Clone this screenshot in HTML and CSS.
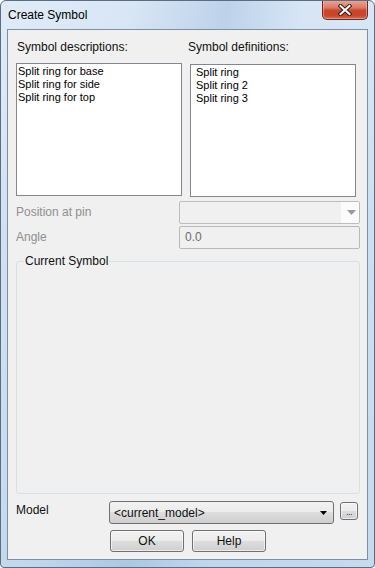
FILE: index.html
```html
<!DOCTYPE html>
<html>
<head>
<meta charset="utf-8">
<title>Create Symbol</title>
<link rel="stylesheet" href="styles.css">
</head>
<body>
<div class="window">
  <div class="titlebar">
    <span class="title">Create Symbol</span>
    <div class="close">
      <svg width="14" height="12" viewBox="0 0 14 12">
        <path d="M2.5 2 L11.5 10 M11.5 2 L2.5 10" stroke="#3d1a14" stroke-width="4" stroke-linecap="square" fill="none"/>
        <path d="M2.5 2 L11.5 10 M11.5 2 L2.5 10" stroke="#ffffff" stroke-width="2" stroke-linecap="square" fill="none"/>
      </svg>
    </div>
  </div>
  <div class="client">
    <div class="lists">
      <div class="col">
        <div class="label label-left">Symbol descriptions:</div>
        <ul class="listbox listbox-left">
          <li>Split ring for base</li>
          <li>Split ring for side</li>
          <li>Split ring for top</li>
        </ul>
      </div>
      <div class="col">
        <div class="label label-right">Symbol definitions:</div>
        <ul class="listbox listbox-right">
          <li>Split ring</li>
          <li>Split ring 2</li>
          <li>Split ring 3</li>
        </ul>
      </div>
    </div>

    <div class="row row-pos">
      <span class="field-label disabled">Position at pin</span>
      <div class="dcombo">
        <span class="dcombo-text"></span>
        <span class="dcombo-btn">
          <svg width="9" height="5" viewBox="0 0 9 5"><path d="M0 0 H9 L4.5 5 Z" fill="#9a9a9a"/></svg>
        </span>
      </div>
    </div>

    <div class="row row-angle">
      <span class="field-label disabled">Angle</span>
      <div class="dtext">0.0</div>
    </div>

    <div class="group">
      <div class="group-box"></div>
      <div class="group-title">Current Symbol</div>
    </div>

    <div class="row row-model">
      <span class="field-label">Model</span>
      <div class="combo">
        <span class="combo-text">&lt;current_model&gt;</span>
        <svg class="combo-arrow" width="7" height="4" viewBox="0 0 7 4"><path d="M0 0 H7 L3.5 4 Z" fill="#000"/></svg>
      </div>
      <div class="btn btn-dots">...</div>
    </div>

    <div class="buttons">
      <div class="btn btn-main">OK</div>
      <div class="btn btn-main">Help</div>
    </div>
  </div>
</div>
</body>
</html>
```

FILE: styles.css
```css
html, body {
  margin: 0;
  padding: 0;
  background: #ffffff;
}

body {
  font-family: "Liberation Sans", Arial, sans-serif;
  font-size: 12px;
  color: #111;
}

.window {
  width: 375px;
  height: 568px;
  box-sizing: border-box;
  border: 1px solid #5b6d80;
  border-radius: 6px 6px 4px 4px;
  padding: 0 6px 7px 6px;
  display: flex;
  flex-direction: column;
  background:
    linear-gradient(100deg, rgba(255,255,255,0.3) 0%, rgba(255,255,255,0.12) 28%, rgba(150,180,215,0.35) 48%, rgba(255,255,255,0.1) 64%, rgba(255,255,255,0.2) 100%),
    linear-gradient(to bottom, #d3e3f4 0%, #c3d8ee 40%, #b9d1ea 100%);
  overflow: hidden;
}

.titlebar {
  height: 28px;
  display: flex;
  align-items: flex-start;
  justify-content: space-between;
  flex: 0 0 28px;
}

.title {
  margin-top: 7px;
  padding-left: 1px;
  line-height: 15px;
  font-size: 12px;
  color: #000;
}

.close {
  width: 46px;
  height: 20px;
  margin-top: -1px;
  box-sizing: border-box;
  border: 1px solid #6a2a22;
  border-top: none;
  border-radius: 0 0 5px 5px;
  background: linear-gradient(to bottom, #e9a99a 0%, #dc7b66 40%, #c9462d 55%, #c8452b 80%, #d76a4c 100%);
  box-shadow: inset 0 0 0 1px rgba(255, 200, 190, 0.45);
  display: flex;
  align-items: center;
  justify-content: center;
}

.close svg {
  display: block;
}

.client {
  flex: 1 1 auto;
  border: 1px solid #7f8fa1;
  background: #f0f0f0;
  padding: 10px 7px 0 8px;
  display: flex;
  flex-direction: column;
}

.lists {
  display: grid;
  grid-template-columns: 166px 166px;
  column-gap: 8px;
}

.label {
  line-height: 15px;
  height: 15px;
  white-space: nowrap;
}

.label-left {
  margin-left: 1px;
}

.label-right {
  margin-left: -2px;
}

.listbox {
  list-style: none;
  margin: 0;
  height: 133px;
  box-sizing: border-box;
  border: 1px solid #828790;
  background: #ffffff;
  font-size: 11px;
  line-height: 13px;
  color: #000;
}

.listbox-left {
  margin-top: 8px;
  padding: 1px 0 0 1px;
}

.listbox-right {
  margin-top: 9px;
  padding: 1px 0 0 5px;
}

.listbox li {
  white-space: nowrap;
}

.row {
  display: flex;
  align-items: center;
  height: 23px;
}

.row-pos {
  margin-top: 4px;
}

.row-angle {
  margin-top: 2px;
}

.field-label {
  line-height: 15px;
  white-space: nowrap;
}

.disabled {
  color: #8f8f8f;
}

.row-pos .field-label,
.row-angle .field-label {
  flex: 0 0 163px;
}

.dcombo {
  flex: 0 0 181px;
  height: 23px;
  box-sizing: border-box;
  border: 1px solid #bdbdbd;
  border-radius: 2px;
  background: #f0f0f0;
  display: flex;
}

.dcombo-text {
  flex: 1 1 auto;
}

.dcombo-btn {
  flex: 0 0 18px;
  background: #fbfbfb;
  display: flex;
  align-items: center;
  justify-content: center;
}

.dcombo-btn svg {
  display: block;
  margin-left: 2px;
}

.dtext {
  flex: 0 0 181px;
  height: 23px;
  box-sizing: border-box;
  border: 1px solid #b9b9b9;
  border-radius: 2px;
  background: #f0f0f0;
  color: #6d6d6d;
  line-height: 21px;
  padding-left: 5px;
}

.group {
  position: relative;
  margin-top: 5px;
  padding-top: 7px;
}

.group-box {
  height: 233px;
  box-sizing: border-box;
  border: 1px solid #d5dfe5;
  border-radius: 3px;
}

.group-title {
  position: absolute;
  top: 0;
  left: 8px;
  padding: 0 1px;
  line-height: 15px;
  background: #f0f0f0;
  white-space: nowrap;
}

.row-model {
  margin-top: 7px;
  align-items: flex-start;
}

.row-model .field-label {
  flex: 0 0 93px;
  margin-top: 2px;
}

.combo {
  flex: 0 0 225px;
  height: 23px;
  box-sizing: border-box;
  border: 1px solid #707070;
  border-radius: 3px;
  background: linear-gradient(to bottom, #f2f2f2 0%, #ebebeb 50%, #dddddd 50%, #cfcfcf 100%);
  display: flex;
  align-items: center;
  padding: 0 6px 0 4px;
}

.combo-text {
  flex: 1 1 auto;
  white-space: nowrap;
}

.combo-arrow {
  display: block;
}

.btn {
  box-sizing: border-box;
  border: 1px solid #707070;
  border-radius: 3px;
  background: linear-gradient(to bottom, #f2f2f2 0%, #ebebeb 50%, #dddddd 50%, #cfcfcf 100%);
  box-shadow: inset 0 0 0 1px rgba(255,255,255,0.6);
  display: flex;
  align-items: center;
  justify-content: center;
}

.btn-dots {
  width: 18px;
  height: 18px;
  margin-left: 6px;
  margin-top: 1px;
  font-size: 9px;
  line-height: 9px;
  letter-spacing: -0.5px;
  color: #3a2a6a;
  padding-top: 2px;
}

.buttons {
  display: flex;
  gap: 8px;
  margin-top: 6px;
  padding-left: 94px;
}

.btn-main {
  width: 74px;
  height: 22px;
  line-height: 15px;
}
```
